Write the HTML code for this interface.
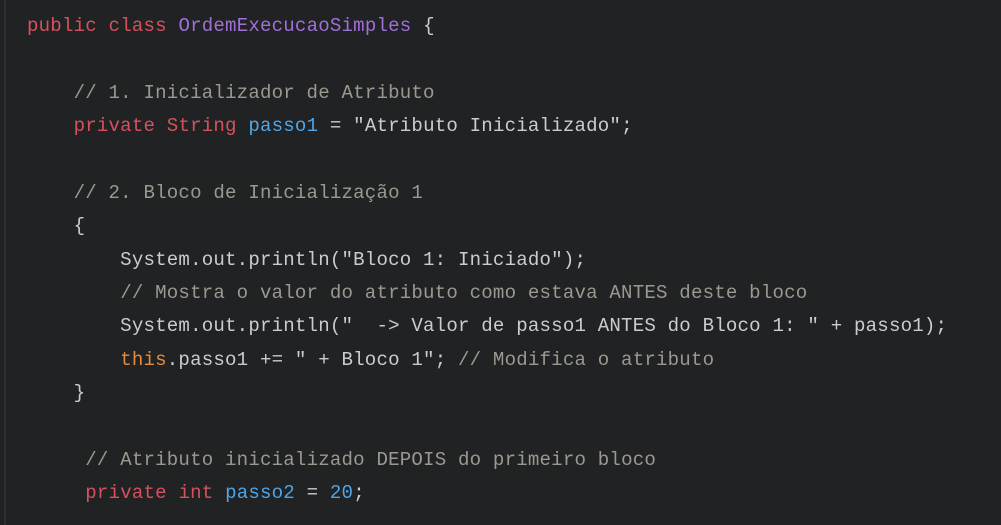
<!DOCTYPE html>
<html><head><meta charset="utf-8"><style>
html,body{margin:0;padding:0;background:#212224;width:1001px;height:525px;overflow:hidden}
.bl{position:absolute;left:4px;top:0;width:2px;height:525px;background:#2e2f33}
pre{position:absolute;left:27px;top:10px;margin:0;font-family:"Liberation Mono",monospace;font-size:19.1px;letter-spacing:0.19px;line-height:33.36px;color:#c9ccd1}
.k{color:#d5525d}.c{color:#a06fd8}.m{color:#9a9990}.b{color:#4fa6e6}.o{color:#e48a3c}
</style></head><body>
<div class="bl"></div>
<pre><span class="k">public</span> <span class="k">class</span> <span class="c">OrdemExecucaoSimples</span> {

    <span class="m">// 1. Inicializador de Atributo</span>
    <span class="k">private</span> <span class="k">String</span> <span class="b">passo1</span> = "Atributo Inicializado";

    <span class="m">// 2. Bloco de Inicialização 1</span>
    {
        System.out.println("Bloco 1: Iniciado");
        <span class="m">// Mostra o valor do atributo como estava ANTES deste bloco</span>
        System.out.println("  -> Valor de passo1 ANTES do Bloco 1: " + passo1);
        <span class="o">this</span>.passo1 += " + Bloco 1"; <span class="m">// Modifica o atributo</span>
    }

     <span class="m">// Atributo inicializado DEPOIS do primeiro bloco</span>
     <span class="k">private</span> <span class="k">int</span> <span class="b">passo2</span> = <span class="b">20</span>;</pre>
</body></html>
